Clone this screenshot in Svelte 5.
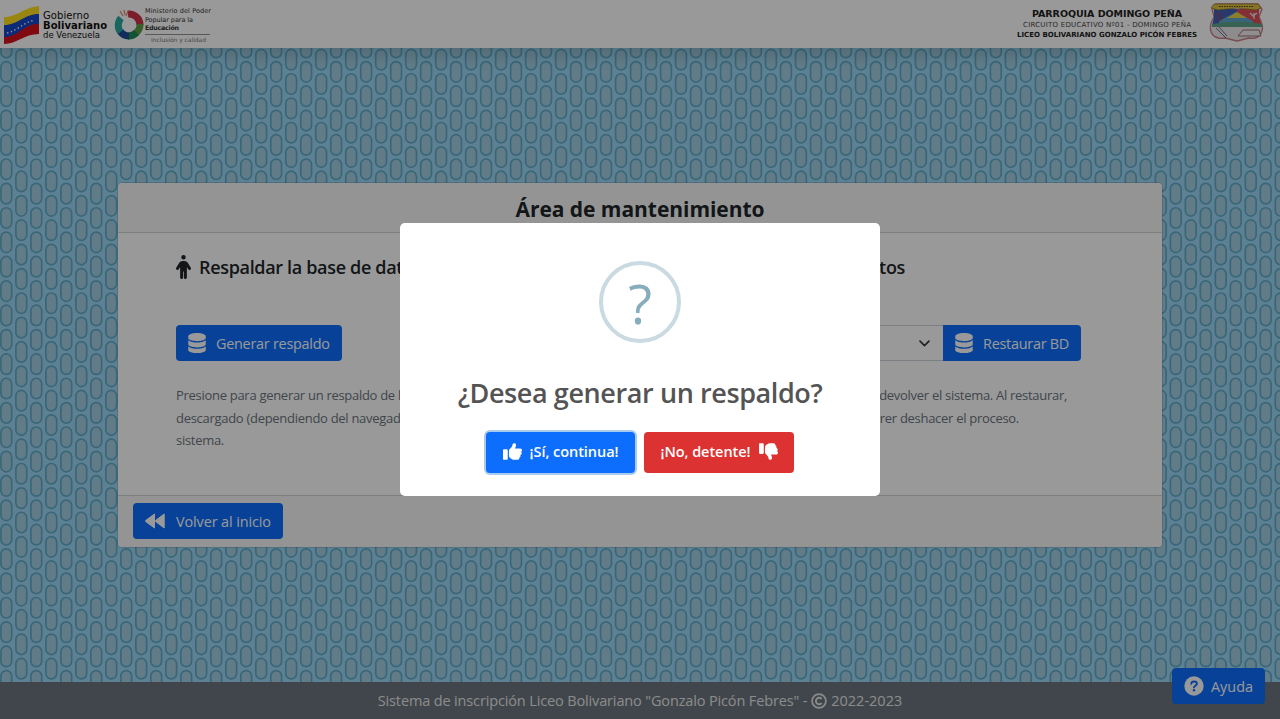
<script lang="ts">
  const db = 'M448 80v48c0 44.200-100.300 80-224 80S0 172.200 0 128V80C0 35.800 100.300 0 224 0s224 35.800 224 80zM393.200 214.700c20.800-7.400 39.900-16.900 54.800-28.600V288c0 44.200-100.300 80-224 80S0 332.200 0 288V186.100c14.900 11.800 34 21.200 54.800 28.600C99.700 230.700 159.500 240 224 240s124.300-9.300 169.200-25.300zM0 346.100c14.900 11.800 34 21.200 54.800 28.600C99.700 390.700 159.500 400 224 400s124.300-9.300 169.200-25.300c20.800-7.400 39.900-16.900 54.800-28.600V432c0 44.200-100.300 80-224 80S0 476.200 0 432V346.100z';
  const thumb = 'M313.400 32.900c26 5.200 42.900 30.500 37.700 56.500l-2.300 11.400c-5.300 26.700-15.100 52.100-28.800 75.200H464c26.500 0 48 21.500 48 48c0 18.500-10.500 34.600-25.900 42.600C497 275.400 504 288.900 504 304c0 23.400-16.800 42.900-38.900 47.100c4.400 7.300 6.900 15.800 6.900 24.900c0 21.300-13.900 39.400-33.100 45.600c.7 3.300 1.100 6.800 1.100 10.400c0 26.500-21.500 48-48 48H294.500c-19 0-37.500-5.600-53.300-16.100l-38.500-25.700C176 420.400 160 390.400 160 358.300V320 272 247.100c0-29.200 13.300-56.700 36-75l7.400-5.900c26.500-21.200 44.600-51 51.200-84.200l2.300-11.400c5.200-26 30.500-42.900 56.500-37.700zM32 192H96c17.700 0 32 14.300 32 32V448c0 17.700-14.300 32-32 32H32c-17.700 0-32-14.300-32-32V224c0-17.700 14.300-32 32-32z';
  const person = 'M112 48a48 48 0 1 1 96 0 48 48 0 1 1 -96 0zm40 304V480c0 17.700-14.300 32-32 32s-32-14.300-32-32V256.900L59.400 304.500c-9.100 15.100-28.800 20-43.900 10.900s-20-28.800-10.900-43.900l58.300-97c17.400-28.900 48.600-46.600 82.300-46.600h29.700c33.700 0 64.900 17.700 82.300 46.600l58.300 97c9.100 15.100 4.200 34.800-10.900 43.900s-34.800 4.200-43.900-10.900L232 256.900V480c0 17.700-14.300 32-32 32s-32-14.300-32-32V352H152z';

  // Wallpaper: columns of pills, every second column shifted by half a step.
  const stepX = 14.993;
  const stepY = 24.36;
  let pills = '';
  for (let c = 0; c < 87; c++) {
    for (let r = -1; r < 31; r++) {
      const x = 0.9 + c * stepX;
      const y = 49.4 + r * stepY + (c % 2 ? 0 : stepY / 2);
      pills += `M${x.toFixed(2)} ${(y + 5.4).toFixed(2)}a5.4 5.4 0 0 1 10.8 0v9.700a5.4 5.4 0 0 1 -10.8 0z`;
    }
  }
</script>

{#snippet database()}
  <svg class="db" viewBox="0 0 448 512"><path fill="currentColor" d={db} /></svg>
{/snippet}

<div class="page">
  <svg class="wallpaper" viewBox="0 0 1280 719"><path d={pills} fill="#a2cee2" stroke="#60acca" stroke-width="1.700" /></svg>
  <header>
    <svg class="gov" viewBox="0 0 215 47">
      <path d="M4 17C18 17 22 8 39 6V17C24 20 17 29 4 29Z" fill="#ffe01b" />
      <path d="M4 25C18 25 24 14 39 14V26C24 28 17 38 4 39Z" fill="#1746c8" />
      <path d="M4 37C19 37 24 23 39 24V34C24 34 17 44 4 44Z" fill="#d8101c" />
      <path d="M7 33C17 31 22 23 35 20" fill="none" stroke="#fff" stroke-width="1.400" stroke-dasharray="1.4 2.5" />
      <g class="verdana" fill="#111">
        <text x="43" y="19" font-size="10" textLength="46">Gobierno</text>
        <text x="43" y="29.300" font-size="10" font-weight="bold" textLength="64">Bolivariano</text>
        <text x="43" y="37.500" font-size="9" textLength="57" lengthAdjust="spacingAndGlyphs">de Venezuela</text>
      </g>
      <g fill="none" stroke-width="7">
        <path d="M128 14A11 11 0 0 1 140 25" stroke="#cf3148" />
        <path d="M140 24A11 11 0 0 1 136 33" stroke="#5f9d45" />
        <path d="M136.500 32.500A11 11 0 0 1 128 36" stroke="#1f8a55" />
        <path d="M129 36A11 11 0 0 1 120 31" stroke="#1f4b94" />
        <path d="M120.500 32A11 11 0 0 1 121 18" stroke="#2ba8a0" />
      </g>
      <path d="M120 11l3 5M124 10l1 5M128 11l-2 5" stroke="#e7856b" stroke-width="1.200" />
      <g class="verdana" fill="#333">
        <text x="145" y="12.800" font-size="6.500" textLength="66">Ministerio del Poder</text>
        <text x="145" y="21.500" font-size="6.500" textLength="48">Popular para la</text>
        <text x="145" y="30.300" font-size="6.300" font-weight="bold" textLength="34">Educación</text>
        <text x="151" y="42" font-size="6" fill="#777" textLength="55">Inclusión y calidad</text>
      </g>
      <path d="M145 34.500H210" stroke="#777" stroke-width=".8" />
    </svg>
    <svg class="school" viewBox="0 0 270 47">
      <g class="verdana" fill="#222">
        <text x="22" y="17" font-size="9.500" font-weight="bold" textLength="150">PARROQUIA DOMINGO PEÑA</text>
        <text x="13" y="27" font-size="7" fill="#444" textLength="168">CIRCUITO EDUCATIVO Nº01 - DOMINGO PEÑA</text>
        <text x="7" y="37" font-size="7" font-weight="bold" textLength="180">LICEO BOLIVARIANO GONZALO PICÓN FEBRES</text>
      </g>
      <path d="M206 4H248L252 9L249 17C257 30 250 40 239 38L227 41L215 38C202 40 196 30 204 17L202 9Z" fill="#ece8ea" stroke="#c98089" stroke-width="1.300" />
      <path d="M227 9H249V17L252 26H227Z" fill="#dc4f55" />
      <path d="M204 9H227V26H202L204 17Z" fill="#4162b8" />
      <path d="M209 21L226 12L243 21V24H209Z" fill="#62a6cf" />
      <path d="M217 18L227 12L237 18Z" fill="#ecd24c" />
      <path d="M202 24Q227 19 252 24V27H202Z" fill="#5ea38c" />
      <path d="M240 13l3 3 4-3M244 13v6" fill="none" stroke="#eee" stroke-width="1.200" />
      <path d="M207 12l2 9M212 12l-2 9" stroke="#c33" stroke-width=".8" />
      <path d="M204 4H248L251 8L246 10L227 8L208 10L201 8Z" fill="#e2c440" stroke="#7a6825" stroke-width=".6" />
      <path d="M209 6.500H243" stroke="#5a4a20" stroke-width="1" stroke-dasharray="1.500 1" />
      <path d="M206 28L216 38M209 27L217 36" stroke="#667095" />
      <path d="M233 30L249 30L251 36L233 36L228 36Z" fill="#eee" stroke="#94606a" stroke-width=".9" />
    </svg>
  </header>

  <main>
    <section class="card">
      <div class="card-head"><h1>Área de mantenimiento</h1></div>
      <div class="card-body">
        <div class="col">
          <h2>
            <svg class="person" viewBox="0 0 320 512"><path fill="currentColor" d={person} /></svg>
            <span>Respaldar la base de datos</span>
          </h2>
          <button class="btn gen">{@render database()}<span>Generar respaldo</span></button>
          <p>Presione para generar un respaldo de la<br />descargado (dependiendo del navegador)<br />sistema.</p>
        </div>
        <div class="col second">
          <h2 class="restore"><span>base de datos</span></h2>
          <div class="group">
            <div class="select">
              <svg viewBox="0 0 16 16"><path d="M1.500 4.500l6.500 6.500 6.500-6.500" fill="none" stroke="#343a40" stroke-width="2.400" stroke-linecap="round" stroke-linejoin="round" /></svg>
            </div>
            <button class="btn joined">{@render database()}<span>Restaurar BD</span></button>
          </div>
          <p class="right"><span class="r1">devolver el sistema. Al restaurar,</span><span class="r2">querer deshacer el proceso.</span></p>
        </div>
      </div>
      <div class="card-foot">
        <button class="btn back">
          <svg viewBox="0 0 20 16"><path d="M9.500 1v14L.9 8.700q-.8-.7 0-1.400ZM19.200 1v14l-8.400-6.300q-.8-.7 0-1.400Z" fill="currentColor" stroke="currentColor" stroke-linejoin="round" /></svg>
          <span>Volver al inicio</span>
        </button>
      </div>
    </section>
  </main>

  <footer>
    <span class="f1">Sistema de inscripción Liceo Bolivariano "Gonzalo Picón Febres" -</span>
    <svg viewBox="0 0 16 16"><g fill="none" stroke="currentColor" stroke-width="1.700"><circle cx="8" cy="8" r="6.900" /><path d="M10.700 5.800a3.300 3.300 0 1 0 0 4.400" stroke-width="1.900" /></g></svg>
    <span class="f2">2022-2023</span>
  </footer>
  <button class="btn help">
    <svg viewBox="0 0 20 20"><circle cx="10" cy="10" r="9.700" fill="currentColor" /><path d="M7.300 7.700c.2-2.900 5.600-2.900 5.600 .1 0 1.900-2.900 1.900-2.900 3.600" fill="none" stroke="#0d6efd" stroke-width="1.900" stroke-linecap="round" /><circle cx="10" cy="14.300" r="1.200" fill="#0d6efd" /></svg>
    <span>Ayuda</span>
  </button>
</div>

<div class="overlay">
  <div class="modal">
    <div class="question"><span>?</span></div>
    <h3>¿Desea generar un respaldo?</h3>
    <div class="actions">
      <button class="yes"><svg viewBox="0 0 512 512"><path fill="currentColor" d={thumb} /></svg><span>¡Sí, continua!</span></button>
      <button class="no"><span>¡No, detente!</span><svg viewBox="0 0 512 512"><path fill="currentColor" d={thumb} transform="matrix(1 0 0 -1 0 512)" /></svg></button>
    </div>
  </div>
</div>

<style>
  :global(body) { margin: 0; overflow: hidden; }
  * { box-sizing: border-box; }
  .page {
    position: relative;
    height: 719px;
    display: flex;
    flex-direction: column;
    font-family: "Open Sans", "Noto Sans", sans-serif;
    color: #212529;
    background: #9bd8f3;
  }
  .wallpaper { position: absolute; inset: 0; width: 1280px; height: 719px; }
  header, main, footer { position: relative; }
  header {
    height: 48px;
    flex: none;
    display: flex;
    justify-content: space-between;
    background: #fff;
    box-shadow: 0 7px 15px rgba(0, 0, 0, 0.15);
  }
  .gov { width: 215px; height: 47px; }
  .school { width: 270px; height: 47px; }
  .verdana { font-family: "DejaVu Sans", sans-serif; }
  main { flex: 1; display: flex; justify-content: center; align-items: center; }
  .card {
    width: 1046px;
    height: 366px;
    display: flex;
    flex-direction: column;
    background: #fff;
    border: 1px solid rgba(0, 0, 0, 0.12);
    border-radius: 5px;
    background-clip: padding-box;
    overflow: hidden;
  }
  .card-head { height: 50px; background: #f7f7f7; border-bottom: 1px solid #d3d3d3; text-align: center; }
  h1 { margin: 0; padding-top: 12px; font-size: 21px; line-height: 28px; font-weight: 700; letter-spacing: -0.04px; }
  .card-body { flex: 1; display: grid; grid-template-columns: 1fr 1fr; column-gap: 30px; padding: 20px 57px 0 58px; }
  .col { min-width: 0; }
  h2 { margin: 0; height: 72px; display: flex; align-items: flex-start; gap: 8px; font-size: 18px; line-height: 29px; font-weight: 600; letter-spacing: -0.33px; white-space: nowrap; }
  .person { width: 15px; height: 24px; margin-top: 2px; }
  .restore { width: 249.500px; justify-content: flex-end; }
  .btn {
    height: 36px;
    display: flex;
    align-items: center;
    padding: 0 12px;
    border: 0;
    border-radius: 4px;
    background: #0d6efd;
    color: #fff;
    font: 400 14.400px/22px "Open Sans", "Noto Sans", sans-serif;
    white-space: nowrap;
  }
  .btn svg { flex: none; }
  .btn span { padding-top: 1px; }
  .db { width: 18px; height: 20px; margin-right: 10px; }
  .gen { width: 166px; letter-spacing: -0.25px; }
  p { margin: 23px 0 0; font-size: 13px; line-height: 22.500px; letter-spacing: -0.29px; color: #6c757d; white-space: nowrap; }
  .right { width: 411.500px; display: flex; flex-direction: column; align-items: flex-end; }
  .r2 { padding-right: 48px; }
  .group { display: flex; width: 425.500px; }
  .select { flex: 1; border: 1px solid #ced4da; border-right: 0; border-radius: 4px 0 0 4px; display: flex; align-items: center; justify-content: flex-end; padding-right: 13px; }
  .select svg { width: 11px; height: 11px; }
  .joined { width: 138px; border-radius: 0 4px 4px 0; letter-spacing: -0.25px; }
  .card-foot { height: 52px; border-top: 1px solid #d3d3d3; background: #f7f7f7; padding: 7px 15px; }
  .back { width: 150px; letter-spacing: -0.1px; }
  .back svg { width: 20px; height: 16px; margin-right: 11px; }
  footer {
    height: 37px;
    flex: none;
    background: #6c757d;
    color: #e8e8e8;
    display: flex;
    justify-content: center;
    align-items: center;
    gap: 4px;
    font-size: 14.500px;
    white-space: nowrap;
  }
  .f1 { letter-spacing: -0.14px; }
  footer svg { width: 16px; height: 16px; }
  .help { position: absolute; right: 15px; bottom: 15px; width: 93px; }
  .help svg { width: 20px; height: 20px; margin-right: 7px; }
  .overlay {
    position: fixed;
    inset: 0;
    display: flex;
    align-items: center;
    justify-content: center;
    background: rgba(0, 0, 0, 0.4);
    font-family: "Open Sans", "Noto Sans", sans-serif;
  }
  .modal { width: 480px; height: 273px; background: #fff; border-radius: 5px; display: flex; flex-direction: column; align-items: center; }
  .question {
    width: 82px;
    height: 82px;
    flex: none;
    margin-top: 37.500px;
    padding-top: 3px;
    border: 4px solid #c9dae1;
    border-radius: 50%;
    color: #87adbd;
    display: flex;
    align-items: center;
    justify-content: center;
    font-size: 55px;
    line-height: 70px;
  }
  h3 { margin: 28px 0 0; height: 43px; font-size: 27px; line-height: 43px; font-weight: 600; letter-spacing: -0.4px; color: #545454; white-space: nowrap; }
  .actions { display: flex; gap: 9px; margin-top: 18px; }
  .actions button {
    width: 150px;
    height: 41px;
    border: 0;
    border-radius: 4px;
    color: #fff;
    display: flex;
    align-items: center;
    justify-content: center;
    gap: 8px;
    font: 600 14.500px/22px "Open Sans", "Noto Sans", sans-serif;
    letter-spacing: -0.05px;
    white-space: nowrap;
  }
  .actions svg { width: 19px; height: 19px; flex: none; }
  .actions .yes { width: 149px; background: #0d6efd; box-shadow: 0 0 0 2px #a9cbee; }
  .actions .no { background: #dc3232; }
  .actions .no svg { margin-top: -2px; }
  .actions .yes svg { margin-top: -2px; }
</style>
